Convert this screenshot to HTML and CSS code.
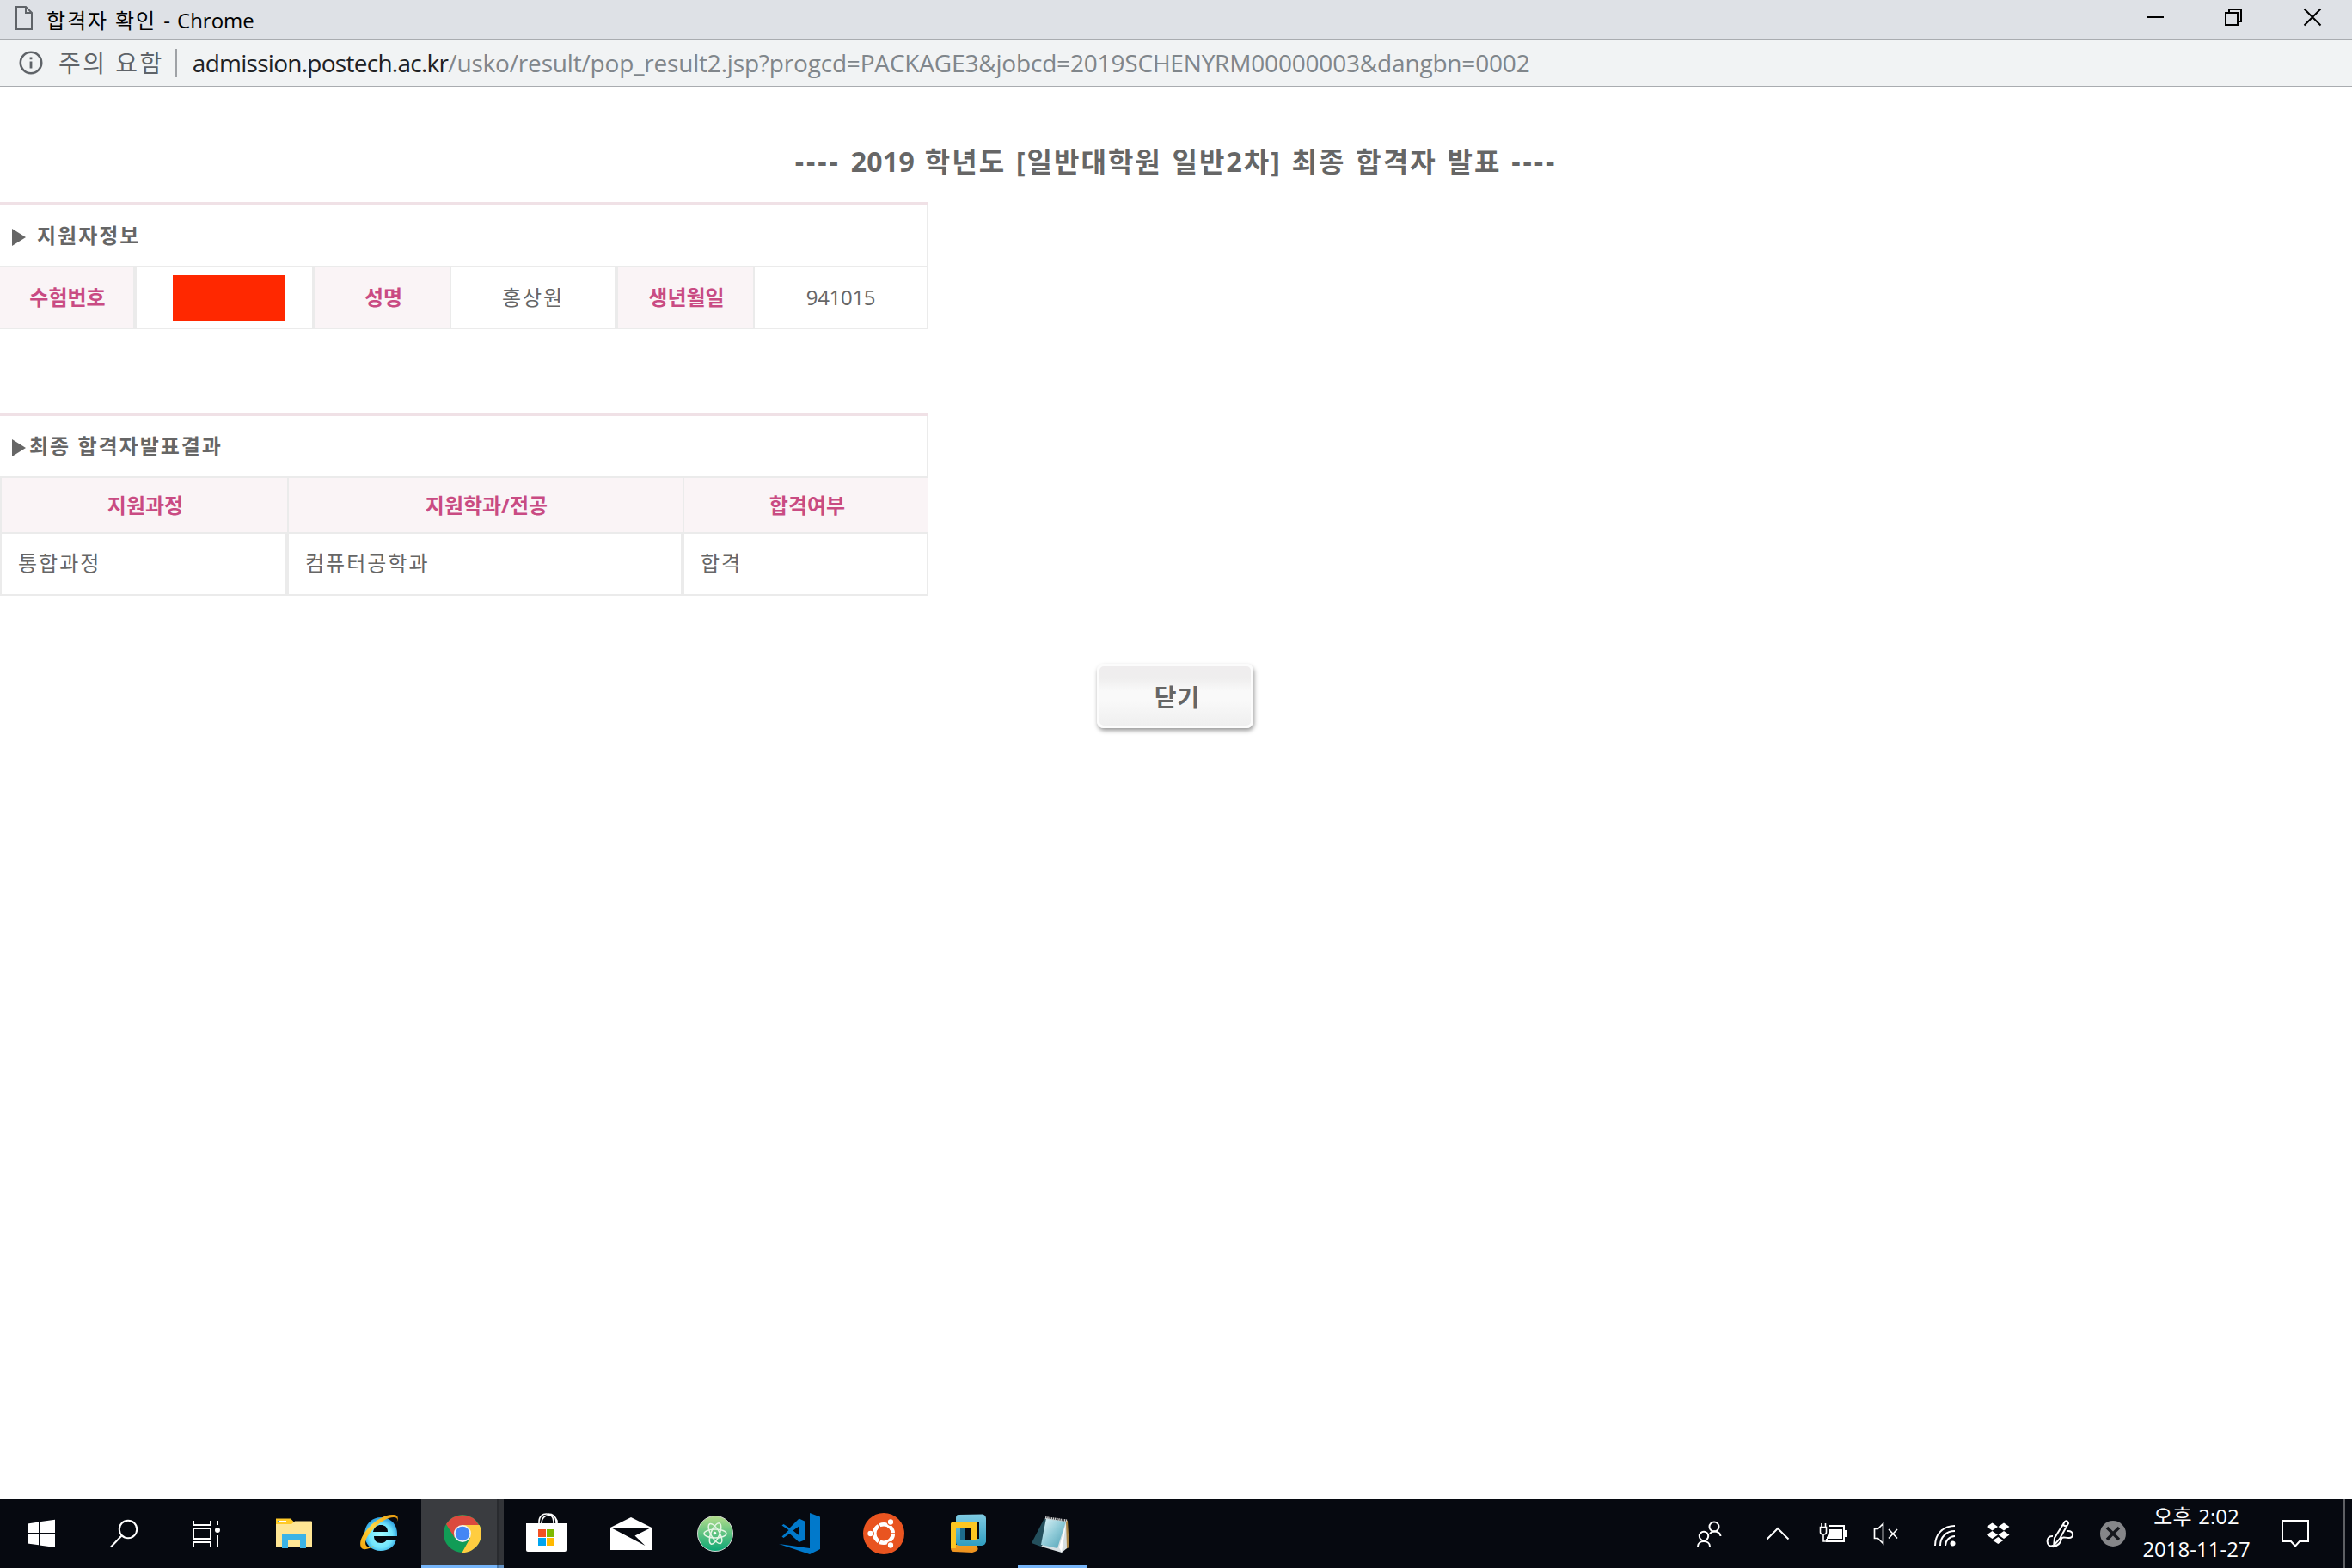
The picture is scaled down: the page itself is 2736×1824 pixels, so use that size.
FILE: index.html
```html
<!DOCTYPE html>
<html lang="ko">
<head>
<meta charset="utf-8">
<title>합격자 확인</title>
<link rel="stylesheet" href="styles.css">
</head>
<body>
<div class="screen">
  <header class="titlebar">
    <svg class="doc-icon" width="22" height="30" viewBox="0 0 22 30"><path d="M2 2h11l7 7v19H2zM13 2v7h7" fill="none" stroke="#5f6368" stroke-width="2"/></svg>
    <span class="title"><span class="title-ko">합격자 확인</span> - Chrome</span>
    <svg class="controls" width="300" height="45" viewBox="0 0 300 45" fill="none" stroke="#000" stroke-width="2"><path d="M61 20h20M153 15h14v14h-14zM157 15v-4h14v14h-4"/><path d="M244.500 10.500l19 19M263.500 10.500l-19 19"/></svg>
  </header>
  <div class="addressbar">
    <svg class="info-icon" width="30" height="30" viewBox="0 0 30 30"><circle cx="15" cy="15" r="12.200" fill="none" stroke="#5f6368" stroke-width="2.600"/><path d="M15 13.500v8M15 8.500v2.800" stroke="#5f6368" stroke-width="2.800"/></svg>
    <span class="warn">주의 요함</span>
    <span class="sep"></span>
    <span class="url"><span class="host">admission.postech.ac.kr</span><span class="path">/usko/result/pop_result2.jsp?progcd=PACKAGE3&amp;jobcd=2019SCHENYRM00000003&amp;dangbn=0002</span></span>
  </div>
  <main class="page">
    <h1 class="heading"><span class="dash">----</span> <span class="year">2019</span> 학년도 [일반대학원 일반2차] 최종 합격자 발표 <span class="dash">----</span></h1>
    <section class="panel">
      <h2 class="panel-title"><svg class="tri" width="16" height="20" viewBox="0 0 16 20"><path d="M0 0l16 10L0 20z" fill="#666"/></svg><span class="gap-wide">지원자정보</span></h2>
      <div class="info-row">
        <div class="label">수험번호</div>
        <div class="value edge"><span class="redacted"></span></div>
        <div class="label edge">성명</div>
        <div class="value">홍상원</div>
        <div class="label edge">생년월일</div>
        <div class="value"><span class="birth">941015</span></div>
      </div>
    </section>
    <section class="panel second">
      <h2 class="panel-title"><svg class="tri" width="16" height="20" viewBox="0 0 16 20"><path d="M0 0l16 10L0 20z" fill="#666"/></svg><span class="gap-tight">최종 합격자발표결과</span></h2>
      <div class="head-row">
        <div class="label edge">지원과정</div>
        <div class="label">지원학과/전공</div>
        <div class="label last">합격여부</div>
      </div>
      <div class="result-row">
        <div class="value edge">통합과정</div>
        <div class="value edge">컴퓨터공학과</div>
        <div class="value edge">합격</div>
      </div>
    </section>
    <button class="close">닫기</button>
  </main>
  <footer class="taskbar">
    <svg width="96" height="80" viewBox="0 0 96 80"><path fill="#fff" d="M32 28.500L45 26.500V39H32zM46 26.200L64 23.700V39H46zM32 40H45V53.300L32 51.500zM46 40H64V56L46 53.500z"/></svg>
    <svg width="96" height="80" viewBox="96 0 96 80" fill="none" stroke="#fff" stroke-width="2"><circle cx="149" cy="35" r="10.200"/><path d="M141.500 42.500L129 55.500"/></svg>
    <svg class="task-view" width="96" height="80" viewBox="192 0 96 80" fill="none" stroke="#fff" stroke-width="2"><path d="M225 25v5h20v-5M225 34h20v12h-20zM225 55v-5h20v5M253 25v5M253 42v13"/><circle cx="253" cy="36" r="3" fill="#fff" stroke="none"/></svg>
    <svg width="98" height="80" viewBox="293 0 98 80"><path fill="#ffca28" d="M321 22.500h17l4 4v5h-21z"/><path fill="#ffe694" d="M321 29h18l4-3.500h19q1 0 1 1V55q0 1-1 1h-40q-1 0-1-1z"/><path fill="#3cb4e7" d="M328 57V41q0-1 1-1h26q1 0 1 1v16h-7V47h-14v10z"/><path fill="#fff" d="M323 25h10v2h-10z"/><path fill="#2ba0dd" d="M323 25h2v2h-2z"/></svg>
    <svg width="98" height="80" viewBox="391 0 98 80">
      <defs><radialGradient id="ie" cx=".5" cy=".55" r=".55"><stop offset="0" stop-color="#a5fbff"/><stop offset=".65" stop-color="#70e5fd"/><stop offset="1" stop-color="#299bdc"/></radialGradient><linearGradient id="ring" x1="0" y1="1" x2="1" y2="0"><stop offset="0" stop-color="#f6a60c"/><stop offset=".5" stop-color="#ffd843"/><stop offset="1" stop-color="#e4940a"/></linearGradient></defs>
      <path fill="url(#ie)" fill-rule="evenodd" d="M443 21c11 0 19 8 19 19v3h-27c0 5 3 8 8 8 4 0 6-2 7-4h11c-2 8-9 13-18 13-11 0-19-8-19-19s8-20 19-20zM434 38h17c0-5-3-8-8-8s-8 3-9 8z"/>
      <path fill="url(#ring)" d="M461.500 27c1.500-4 .5-6-3.500-6-7 0-17 6-24 14-7 7-10 14-8.500 18 1 3 5 3 10 1-6 4-13 6-15.500 2-3-6 2-16 10-24 8-9 20-15 28-14 5 0 6 4 3.500 9z"/>
    </svg>
    <svg width="98" height="80" viewBox="489 0 98 80">
      <path fill="#3a3c40" d="M490 0h88v80h-88z"/><path fill="#292b2f" d="M578 0h2v80h-2z"/><path fill="#323438" d="M580 0h6v80h-6z"/>
      <path fill="#76b5f9" d="M490 76h88v4h-88z"/><path fill="#4a78a8" d="M578 76h2v4h-2z"/><path fill="#6190c4" d="M580 76h6v4h-6z"/>
      <circle cx="538" cy="40" r="22" fill="#119c56"/><path fill="#db4a3e" d="M519 29A22 22 0 0 1 557.100 30H538L529 45z"/><path fill="#ffcd40" d="M538 30H557.600A22 22 0 0 1 537.500 62L547 45z"/><circle cx="538" cy="40" r="10" fill="#f1f1f1"/><circle cx="538" cy="40" r="8.300" fill="#4486f4"/>
    </svg>
    <svg width="98" height="80" viewBox="587 0 98 80"><path fill="none" stroke="#fff" stroke-width="1.600" d="M627 29v-3c0-12 17-12 17 0v3M630 29v-2c0-10 15-12 18-2v4M637 17c7 0 10 4 10 9v3"/><path fill="#fff" d="M612 28h47v31q0 2-2 2h-43q-2 0-2-2z"/><path fill="#f25022" d="M626 35h9v9h-9z"/><path fill="#7fba00" d="M636 35h9v9h-9z"/><path fill="#00a4ef" d="M626 45h9v9h-9z"/><path fill="#ffb900" d="M636 45h9v9h-9z"/></svg>
    <svg width="98" height="80" viewBox="685 0 98 80"><path fill="#fff" d="M710 33L734 21 758 33V59H710z"/><path fill="#060910" d="M710.500 33H757.500L738.500 42.500 750.500 54z"/></svg>
    <svg width="98" height="80" viewBox="783 0 98 80"><defs><linearGradient id="atom" x1="0" y1="0" x2="0" y2="1"><stop offset="0" stop-color="#b4dd8c"/><stop offset="1" stop-color="#0aa775"/></linearGradient></defs><circle cx="832" cy="40" r="20.500" fill="url(#atom)" stroke="#d5d8d5"/><g fill="none" stroke="#e4f5e4" stroke-width="1.500"><ellipse cx="832" cy="40" rx="13" ry="5"/><ellipse cx="832" cy="40" rx="13" ry="5" transform="rotate(60 832 40)"/><ellipse cx="832" cy="40" rx="13" ry="5" transform="rotate(112 832 40)"/></g><circle cx="831.500" cy="39.500" r="1.700" fill="#fff"/></svg>
    <svg width="98" height="80" viewBox="881 0 98 80"><path fill="#0179cb" d="M942 16l12 4.500V58l-12 6-36-12 36 5z"/><path fill="#0179cb" fill-rule="evenodd" d="M909.500 30.500l2-1.500 7 4.500 11-11 6.500 3v22l-6.500 2.500-11-10-7 5-2-1.500 8-7.500zM922.500 36.500l7.500 6V31z"/></svg>
    <svg width="98" height="80" viewBox="979 0 98 80"><circle cx="1028" cy="40" r="24" fill="#e95420"/><circle cx="1028" cy="40" r="10.800" fill="none" stroke="#fff" stroke-width="4.600"/><path stroke="#e95420" stroke-width="1.500" d="M1028 40h15M1028 40l-7.500-13M1028 40l-7.500 13"/><circle cx="1028" cy="40" r="8" fill="#e95420"/><g fill="#fff" stroke="#e95420" stroke-width="1.300"><circle cx="1012.500" cy="40" r="3.800"/><circle cx="1036" cy="26.500" r="3.800"/><circle cx="1036" cy="53.500" r="3.800"/></g></svg>
    <svg width="98" height="80" viewBox="1077 0 98 80"><defs><linearGradient id="vb" x1="0" y1="0" x2="0" y2="1"><stop offset="0" stop-color="#7fcbe2"/><stop offset="1" stop-color="#2f9dc0"/></linearGradient><linearGradient id="vo" x1="0" y1="0" x2="0" y2="1"><stop offset="0" stop-color="#fdc621"/><stop offset="1" stop-color="#ed9120"/></linearGradient></defs>
      <path fill="url(#vo)" fill-rule="evenodd" d="M1110 26h24q3 0 3 3v27q2 3-3 5l-3 1-21-1q-4 0-4-4V30q0-4 4-4zM1112 33v20h19V33z"/>
      <path fill="url(#vb)" fill-rule="evenodd" d="M1115 18l28-.5q4 1 4 5v27q-1 4-5 4.500h-26q-4 0-4-4V22q0-4 3-4zM1119 26v20h20V26z"/>
      <path fill="#1d6c8d" d="M1117 33h6v14h-6z"/><path fill="#060910" d="M1122 34h8v13h-8z"/>
      <path fill="#fdc621" fill-rule="evenodd" d="M1110 26h24q3 0 3 3v18h-7V33h-18v24h-6V30q0-4 4-4z"/>
    </svg>
    <svg width="98" height="80" viewBox="1175 0 98 80"><defs><linearGradient id="np" x1="0" y1="0" x2="1" y2="1"><stop offset="0" stop-color="#e6f7fa"/><stop offset=".5" stop-color="#90cbd8"/><stop offset="1" stop-color="#4a9db2"/></linearGradient></defs><path fill="#a98445" d="M1240 24l2 1 2 31-5 2z"/><path fill="#d7dfe2" d="M1240 25l1 32-6 5-24-7z"/><path fill="#fff" d="M1232 56l8-28-5 34z"/><path fill="#24505d" d="M1215 22l-15 29 11 4 12-25z"/><path fill="url(#np)" d="M1217 22l23 4-10 31-19-4z"/><path fill="none" stroke="#c8c8c8" stroke-width="3" stroke-dasharray="1.500 .7" d="M1216 21.500l25 3.500"/><path fill="#76b5f9" d="M1184 76h80v4h-80z"/></svg>
    <div class="tray">
      <svg width="540" height="80" viewBox="1950 0 540 80" fill="none" stroke="#fff" stroke-width="2">
        <path d="M1989 40c4-5 12-2 12.500 3"/><circle cx="1994" cy="32" r="5.500"/><circle cx="1982" cy="43" r="5.200"/><path d="M1975 55c0-8 14-8 14 0"/>
        <path d="M2055.500 46.500L2068 34l12.500 12.500"/>
        <path d="M2128 31h17v18h-20v-3M2147 36v8"/><path fill="#fff" stroke="none" d="M2128 35h15v11h-18v-2q3-2 3-5z"/><path stroke-width="1.600" d="M2117.500 32.500h7v6q0 2.500-3.500 2.500t-3.500-2.500zM2119 28v4M2123.500 28v4M2121 41v8h4"/>
        <path d="M2180.500 34.500v11h4l6 6V28.500l-6 6zM2197 35l10 10.500M2207 35l-10 10.500" stroke-width="1.700"/>
        <path d="M2251 54c0-13 9-23 23-23M2257 54c0-10 7-17 17-17M2263 54c0-6 5-11 11-11"/><circle cx="2271.500" cy="51.500" r="3" fill="#fff" stroke="none"/>
        <path fill="#fff" stroke="none" d="M2317.500 27.500l6.500 4.500-6.500 4.500-6.500-4.500zM2331 27.500l6.500 4.500-6.500 4.500-6.500-4.500zM2317.500 37l6.500 4.500-6.500 4.500-6.500-4.500zM2331 37l6.500 4.500-6.500 4.500-6.500-4.500zM2324.300 44l6 4-6 4-6-4z"/>
        <path d="M2388 54c-8 3-9-12 0-11M2405 37c8-1 8 9 1 8-4 0-7-2-8 1-1 6-5 8-9 9l1-10 12-19q3-2 4 2l-10 18-8 9M2400 30l4 2"/>
        <circle cx="2458" cy="40" r="15" fill="#858689" stroke="none"/><path stroke="#15171c" stroke-width="3.500" d="M2451 33l14 14M2465 33l-14 14"/>
      </svg>
      <div class="clock"><span class="time">오후 2:02</span><span class="date">2018-11-27</span></div>
      <svg width="110" height="80" viewBox="2626 0 110 80" fill="none" stroke="#fff" stroke-width="2"><path d="M2655 25h30v24h-10l-5 5.500-5-5.500h-10z"/><path stroke="#5e6064" d="M2727 0v80"/></svg>
    </div>
  </footer>
</div>
</body>
</html>
```
FILE: styles.css
```css
* { box-sizing: border-box; }
body { margin: 0; background: #fff; color: #666; font-family: "Open Sans", "Noto Sans CJK KR", sans-serif; font-size: 24px; }
svg { display: block; flex: none; }
.screen { width: 2736px; height: 1824px; display: flex; flex-direction: column; overflow: hidden; }

.titlebar { height: 46px; flex: none; display: flex; align-items: center; background: #dee1e6; border-bottom: 1px solid #a9acb0; padding-left: 17px; }
.doc-icon { margin-top: -3px; }
.title { color: #000; margin-left: 15px; padding-top: 2px; line-height: 43px; white-space: nowrap; word-spacing: 1.9px; }
.title-ko { letter-spacing: 1.9px; word-spacing: 0; }
.controls { margin-left: auto; }

.addressbar { height: 55px; flex: none; display: flex; align-items: center; background: #f1f3f4; border-bottom: 1px solid #a9acb0; padding-left: 21px; white-space: nowrap; font-size: 28px; }
.warn { color: #5f6368; margin-left: 17px; line-height: 52px; letter-spacing: 2.5px; }
.sep { width: 2px; height: 32px; background: #9fa2a6; margin-left: 13px; }
.url { margin-left: 18px; color: #80868b; line-height: 52px; }
.host { color: #202124; letter-spacing: -.73px; }
.path { letter-spacing: -.18px; }

.page { flex: 1; display: flex; flex-direction: column; }
.heading { margin: 63px 0 0; height: 48px; line-height: 48px; font-size: 32px; font-weight: 700; text-align: center; letter-spacing: 2px; word-spacing: 1.5px; }
.dash { letter-spacing: 3px; }
.year { letter-spacing: .3px; }
.panel { width: 1080px; margin-top: 23px; border-top: 4px solid #f0e1e6; }
.second { margin-top: 97px; }
.panel-title { margin: 0; height: 72px; display: flex; align-items: center; padding-left: 14px; font-size: 24px; letter-spacing: 2px; border-right: 2px solid #ebebeb; border-bottom: 2px solid #ebebeb; }
.panel-title span { padding-bottom: 4px; }
.tri { margin-top: 3px; }
.gap-wide { margin-left: 13px; }
.gap-tight { margin-left: 4px; }
.info-row, .head-row, .result-row { display: grid; border-bottom: 2px solid #ebebeb; }
.info-row { grid-template-columns: 157px 208px 160px 192px 161px 202px; height: 72px; }
.head-row { grid-template-columns: 336px 460px 284px; height: 65px; }
.result-row { grid-template-columns: 334px 460px 286px; height: 72px; }
.label, .value { display: flex; align-items: center; justify-content: center; border-right: 2px solid #ebebeb; padding-bottom: 4px; }
.label { background: #faf4f6; color: #c94b83; font-weight: 700; padding-left: 2px; }
.value { letter-spacing: 2px; }
.edge { border-left: 2px solid #ebebeb; }
.head-row .label { padding-bottom: 3px; }
.last { border-right: 0; }
.result-row .value { justify-content: flex-start; padding: 0 0 5px 19px; }
.redacted { width: 130px; height: 53px; background: #ff2800; margin: 5px 0 0 10px; }
.birth { letter-spacing: -.3px; padding-top: 2px; }
.close { align-self: center; width: 182px; height: 75px; margin: 79px 3px 0 0; padding: 0 0 0 6px; border: 3px solid #fcfcfc; border-radius: 8px; background: linear-gradient(#efedee 0%, #efeeee 20%, #f9f9f9 42%, #f9f9f9 58%, #efefef 100%); box-shadow: 1px 3px 5px rgba(0, 0, 0, .4); color: #666; font: 700 28px "Open Sans", "Noto Sans CJK KR", sans-serif; letter-spacing: 1px; }

.taskbar { height: 80px; flex: none; display: flex; background: #060910; color: #fff; }
.task-view { margin-right: 5px; }
.tray { margin-left: auto; display: flex; }
.clock { width: 136px; padding: 1px 6px 0 0; display: flex; flex-direction: column; align-items: center; line-height: 38px; white-space: nowrap; }
.time { word-spacing: 1.5px; }
```
